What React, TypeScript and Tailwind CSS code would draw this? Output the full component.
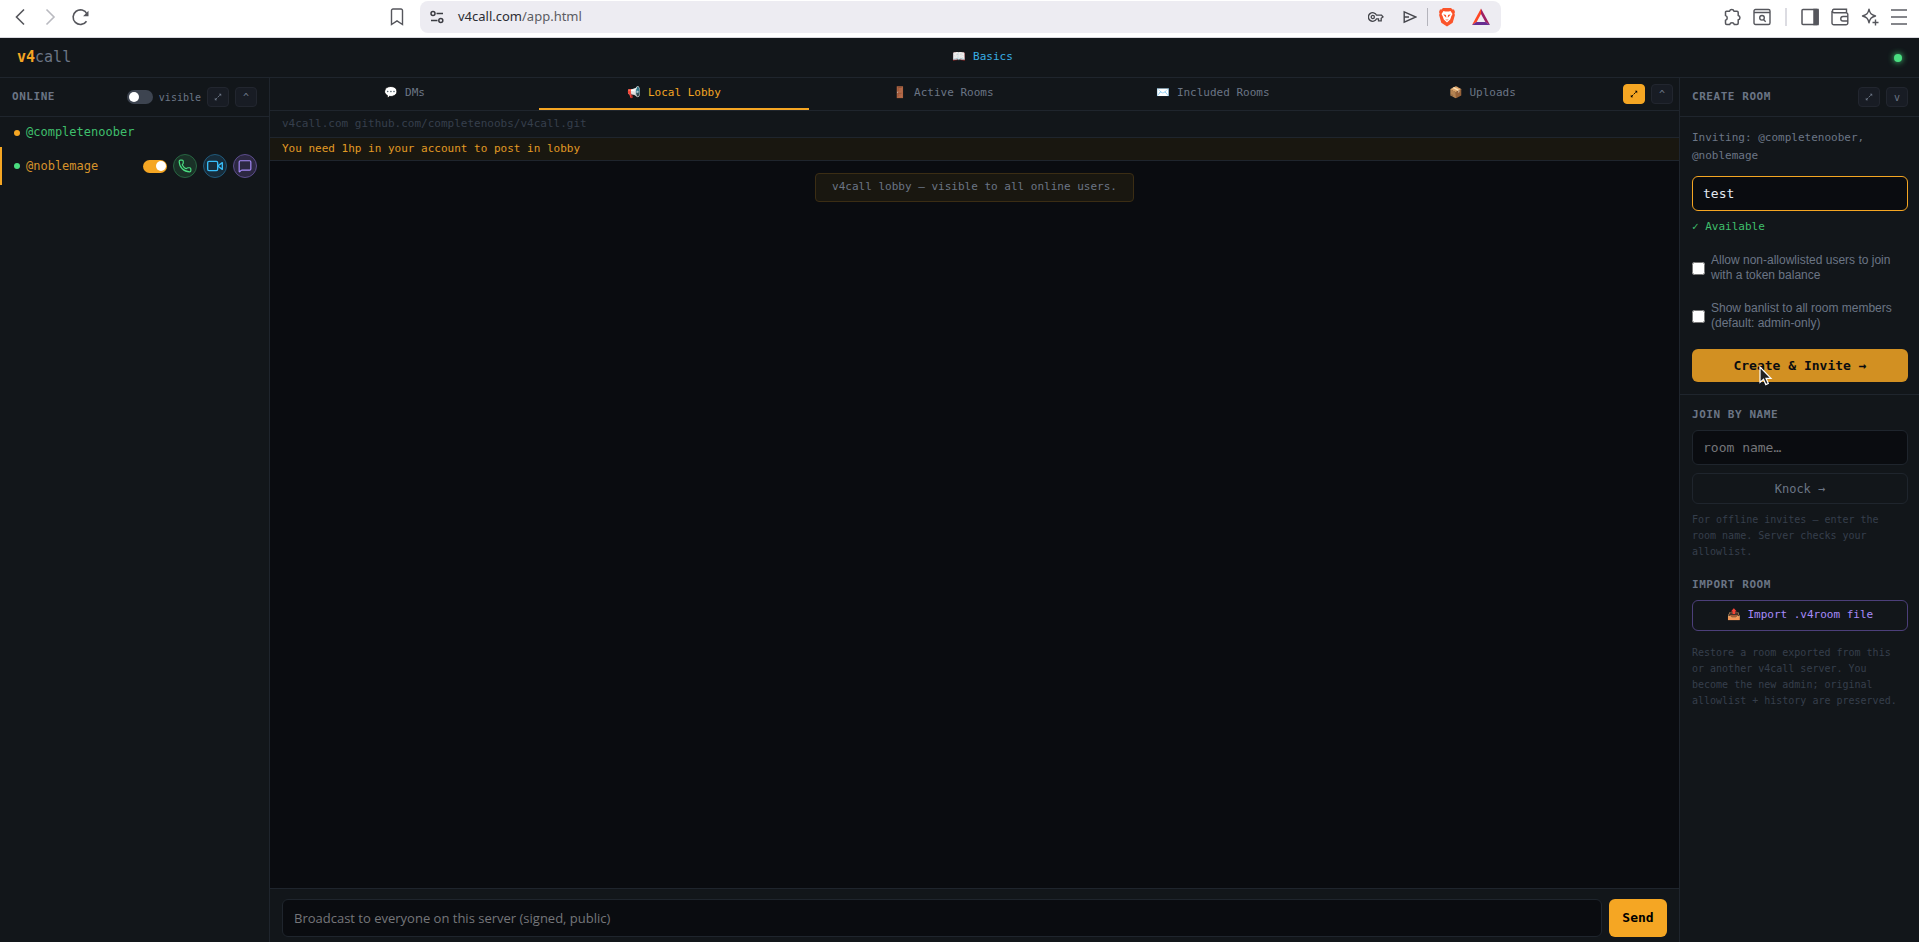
import type { ReactNode } from "react";
import { Phone, Video, MessageSquare } from "lucide-react";

const tabs = [
  { icon: "💬", label: "DMs" },
  { icon: "📢", label: "Local Lobby", active: true },
  { icon: "🚪", label: "Active Rooms" },
  { icon: "✉️", label: "Included Rooms" },
  { icon: "📦", label: "Uploads" },
];

function IconButton({ label, children, active }: { label: string; children: ReactNode; active?: boolean }) {
  return (
    <button
      aria-label={label}
      className={`flex h-5 w-[22px] shrink-0 items-center justify-center rounded border text-[10px] ${
        active
          ? "border-[#f5a623] bg-[#f5a623] text-black"
          : "border-[#22262f] bg-[#181c24] text-[#6b7585]"
      }`}
    >
      {children}
    </button>
  );
}

function Expand() {
  return (
    <svg viewBox="0 0 8 8" className="size-2" fill="currentColor" stroke="currentColor">
      <path d="M1.5 6.5l5-5" strokeWidth="0.9" strokeDasharray="2.6 0.8" />
      <path d="M4.8 0.8h2.4v2.4zM0.8 4.8v2.4h2.4z" stroke="none" />
    </svg>
  );
}

function BrowserBar() {
  return (
    <div className="flex h-[38px] shrink-0 items-center border-b border-[#d9d9df] bg-white pr-[11px] pb-[3px] pl-3 text-[#55565c]">
      <div className="flex w-[408px] shrink-0 items-center">
        <button aria-label="Back" className="mr-3 flex">
          <svg width="18" height="18" viewBox="0 0 18 18" fill="none" stroke="currentColor" strokeWidth="1.6">
            <path d="M12 1.5L4.5 9l7.5 7.5" />
          </svg>
        </button>
        <button aria-label="Forward" className="mr-3 flex text-[#b9bac0]">
          <svg width="18" height="18" viewBox="0 0 18 18" fill="none" stroke="currentColor" strokeWidth="1.6">
            <path d="M4.5 1.5L12 9l-7.5 7.5" />
          </svg>
        </button>
        <button aria-label="Reload" className="flex">
          <svg width="18" height="18" viewBox="0 0 18 18" fill="none" stroke="currentColor" strokeWidth="1.6">
            <path d="M14.5 13.2A7.3 7.3 0 1 1 15 6" />
            <path d="M16.5 2.8v5.4h-5.4z" fill="currentColor" stroke="none" />
          </svg>
        </button>
        <button aria-label="Bookmark" className="mr-4 ml-auto flex">
          <svg width="14" height="18" viewBox="0 0 14 18" fill="none" stroke="currentColor" strokeWidth="1.4">
            <path d="M1.5 2.5a1.5 1.5 0 0 1 1.5-1.5h8a1.5 1.5 0 0 1 1.5 1.5v14L7 12.8 1.5 16.5z" />
          </svg>
        </button>
      </div>
      <div className="flex h-8 min-w-0 flex-[1_1_1080px] items-center rounded-lg bg-[#edecf2] pr-[11px] pl-[10px]">
        <svg width="14" height="14" viewBox="0 0 14 14" fill="none" stroke="#3b3c42" strokeWidth="1.5">
          <circle cx="3" cy="3.5" r="2" />
          <path d="M6.5 3.5H13M1 10.5h6.5" />
          <circle cx="10.8" cy="10.5" r="2" />
        </svg>
        <span className="ml-[14px] font-['Noto_Sans',sans-serif] text-[13px] text-[#2c2d33]">
          v4call.com<span className="text-[#5b5c63]">/app.html</span>
        </span>
        <div className="ml-auto flex items-center text-[#45464c]">
          <svg width="16" height="12" viewBox="0 0 16 12" fill="none" stroke="currentColor" strokeWidth="1.3">
            <path d="M8.6 4.2A4.3 4.3 0 1 0 8.6 7.8H10.5V9.8H13.2V7.3L15 6 13.5 4.2z" />
            <circle cx="4.8" cy="6" r="1.6" />
          </svg>
          <svg width="14" height="14" viewBox="0 0 14 14" fill="none" stroke="currentColor" strokeWidth="1.4" className="ml-[19px]">
            <path d="M1.2 1.8L13 7 1.2 12.2V1.8zM1.2 7H6" />
          </svg>
          <span className="mx-[10px] h-[18px] w-px bg-[#b4b4bc]" />
          <svg width="18" height="20" viewBox="0 0 18 20">
            <path d="M5 1h8l1.5 1.6 1.5-.2 1 2.6-.6 1.6.5 1.5-2.2 7.6L9 19.5 3.3 15.7 1.1 8.1l.5-1.5L1 5l1-2.6 1.5.2z" fill="#fb542b" />
            <path d="M5.5 4l1.7.5h3.6l1.7-.5 2 3-1.3 2.6-1 2.8L9 15.500 5.800 12.400l-1-2.800L3.500 7z" fill="#fff" />
            <path d="M5.300 7.200l2.700.8.300 2.800L6.500 9zM12.700 7.200l-2.700.8-.3 2.800L11.500 9zM7.200 12l1.800.8 1.800-.8L9 13.800z" fill="#fb542b" />
          </svg>
          <svg width="18" height="18" viewBox="0 0 18 18" className="ml-4">
            <path d="M9 0.5L0 17l4.500-2.700L9 6z" fill="#ff4724" />
            <path d="M9 0.5L18 17l-4.500-2.700L9 6z" fill="#9e1f63" />
            <path d="M0 17h18l-4.500-2.900h-9z" fill="#662d91" />
          </svg>
        </div>
      </div>
      <div className="flex shrink-0 items-center pl-[223px]">
        <svg width="18" height="18" viewBox="0 0 18 18" fill="none" stroke="currentColor" strokeWidth="1.5">
          <path d="M2.500 3.200H5.600a2.200 2.200 0 0 1 4.300 0H13a1.200 1.200 0 0 1 1.200 1.200v3.100a2.200 2.200 0 0 1 0 4.300v3.500a1.200 1.200 0 0 1-1.200 1.200h-2.700a2.400 2.400 0 0 0-4.600 0H2.700a1.200 1.200 0 0 1-1.200-1.200v-3.100a2.400 2.400 0 0 0 0-4.600V4.200a1 1 0 0 1 1-1z" strokeLinejoin="round" />
        </svg>
        <svg width="18" height="18" viewBox="0 0 18 18" fill="none" stroke="currentColor" strokeWidth="1.4" className="ml-[11px]">
          <rect x="1" y="1.500" width="16" height="15" rx="1.5" />
          <path d="M1 4.500h16M10.500 11.500l2.200 2.200" />
          <circle cx="9" cy="9.800" r="2.300" />
        </svg>
        <span className="mx-[14px] h-[18px] w-0.5 bg-[#dcdce2]" />
        <svg width="18" height="18" viewBox="0 0 18 18" fill="none" stroke="currentColor" strokeWidth="1.5">
          <rect x="1" y="1.500" width="16" height="15" rx="1" />
          <path d="M13 1.500h4v15h-4z" fill="currentColor" />
        </svg>
        <svg width="18" height="18" viewBox="0 0 18 18" fill="none" stroke="currentColor" strokeWidth="1.4" className="ml-3">
          <path d="M1 3v12a1.800 1.800 0 0 0 1.800 1.800H15a1.800 1.800 0 0 0 1.800-1.800V6.500A1.800 1.800 0 0 0 15 4.700H2.800A1.800 1.800 0 0 1 2.800 1.200H15.500V4.700M17 8.500h-5a2.200 2.200 0 0 0 0 4.500h5" />
        </svg>
        <svg width="18" height="18" viewBox="0 0 18 18" fill="none" stroke="currentColor" strokeWidth="1.4" className="ml-3">
          <path d="M8 1.200c.9 4.300 2.200 5.600 6.500 6.800C10.200 9.200 8.900 10.500 8 14.800 7.100 10.500 5.800 9.200 1.500 8 5.800 6.800 7.100 5.500 8 1.200zM14.500 11.500v6M11.500 14.500h6" strokeLinejoin="round" />
        </svg>
        <svg width="18" height="18" viewBox="0 0 18 18" fill="none" stroke="#85868b" strokeWidth="2" className="ml-[11px]">
          <path d="M1 2h16M1 9h16M1 16h16" />
        </svg>
      </div>
    </div>
  );
}

function Sidebar() {
  return (
    <aside className="w-[270px] shrink-0 border-r border-[#1f252d] bg-[#12161a]">
      <div className="flex h-[39px] items-center gap-1.5 border-b border-[#1f252d] px-3">
        <h2 className="mr-auto text-[11px] font-bold tracking-wider text-[#6b7585]">ONLINE</h2>
        <label className="flex items-center gap-1.5 text-[10px] text-[#6b7585]">
          <input type="checkbox" className="peer sr-only" />
          <span className="flex h-3.5 w-[26px] items-center rounded-full bg-[#3d4450] px-0.5">
            <span className="size-2.5 rounded-full bg-white" />
          </span>
          visible
        </label>
        <IconButton label="Expand online list"><Expand /></IconButton>
        <IconButton label="Collapse online list">^</IconButton>
      </div>
      <ul className="pt-px text-xs leading-[15px]">
        <li className="flex items-center gap-1.5 py-[7px] pr-3 pl-3.5">
          <span className="size-1.5 rounded-full bg-[#f5a623]" />
          <span className="text-[#3fbf6c]">@completenoober</span>
        </li>
        <li className="flex items-center gap-1.5 border-l-2 border-[#f5a623] py-[7px] pr-3 pl-3">
          <span className="size-1.5 rounded-full bg-[#4ade80]" />
          <span className="mr-auto text-[#d6922a]">@noblemage</span>
          <label className="flex h-[13px] w-6 items-center justify-end rounded-full bg-[#f5a623] px-px">
            <input type="checkbox" defaultChecked aria-label="Select noblemage" className="sr-only" />
            <span className="size-2.5 rounded-full bg-white" />
          </label>
          <button aria-label="Call" className="flex size-6 items-center justify-center rounded-full border border-[#276441] bg-[#1a3127] text-[#4ade80]">
            <Phone size={14} strokeWidth={2} />
          </button>
          <button aria-label="Video call" className="flex size-6 items-center justify-center rounded-full border border-[#20597a] bg-[#172c3a] text-[#38bdf8]">
            <svg width="16" height="16" viewBox="0 0 24 24" fill="none" stroke="currentColor" strokeWidth="2" strokeLinejoin="round">
              <rect x="1" y="5" width="15" height="14" rx="2" />
              <path d="M23 7l-7 5 7 5z" />
            </svg>
          </button>
          <button aria-label="Message" className="flex size-6 items-center justify-center rounded-full border border-[#5b4c8c] bg-[#2c2841] text-[#a78bfa]">
            <MessageSquare size={14} strokeWidth={2} />
          </button>
        </li>
      </ul>
    </aside>
  );
}

function Lobby() {
  return (
    <main className="flex min-w-0 flex-1 flex-col bg-[#0a0c10]">
      <nav className="flex h-[33px] shrink-0 border-b border-[#1f252d] bg-[#12161a]">
        {tabs.map((tab) => (
          <button
            key={tab.label}
            className={`flex-1 border-b-2 text-[11px] ${
              tab.active ? "border-[#f5a623] text-[#f5a623]" : "border-transparent text-[#6b7585]"
            }`}
          >
            {tab.icon} {tab.label}
          </button>
        ))}
        <div className="flex items-center gap-1.5 px-1.5">
          <IconButton label="Expand lobby" active><Expand /></IconButton>
          <IconButton label="Collapse lobby">^</IconButton>
        </div>
      </nav>
      <div className="flex h-[27px] shrink-0 items-center border-b border-[#1f252d] bg-[#12161a] px-3 text-[11px] text-[#363f4c]">
        v4call.com github.com/completenoobs/v4call.git
      </div>
      <div className="flex h-[23px] shrink-0 items-center border-b border-[#1f252d] bg-[#191710] px-3 text-[11px] text-[#e29a24]">
        You need 1hp in your account to post in lobby
      </div>
      <div className="flex flex-1 flex-col items-center p-3">
        <p className="flex h-[29px] items-center rounded border border-[#3b2d14] bg-[#191710] px-4 text-[11px] text-[#6b7585]">
          v4call lobby — visible to all online users.
        </p>
      </div>
      <form className="flex shrink-0 gap-[7px] border-t border-[#1f252d] bg-[#12161a] px-3 pt-2.5 pb-[5px]">
        <input
          aria-label="Broadcast message"
          placeholder="Broadcast to everyone on this server (signed, public)"
          className="h-[38px] min-w-0 flex-1 rounded-md border border-[#1f252d] bg-[#0a0c10] px-[11px] font-['Open_Sans',sans-serif] text-[13px] placeholder:text-[#75767a]"
        />
        <button type="button" className="w-[58px] rounded-md bg-[#f5a623] text-[13px] font-bold text-black">
          Send
        </button>
      </form>
    </main>
  );
}

function RoomPanel() {
  return (
    <aside className="w-60 shrink-0 border-l border-[#1f252d] bg-[#12161a] text-[#6b7585]">
      <div className="flex h-[39px] items-center gap-1.5 border-b border-[#1f252d] pr-[11px] pl-3">
        <h2 className="mr-auto text-[11px] font-bold tracking-wider">CREATE ROOM</h2>
        <IconButton label="Expand create room"><Expand /></IconButton>
        <IconButton label="Collapse create room">v</IconButton>
      </div>
      <section className="border-b border-[#1f252d] py-3 pr-[11px] pl-3">
        <p className="text-[11px] leading-[18px]">Inviting: @completenoober, @noblemage</p>
        <input
          aria-label="New room name"
          defaultValue="test"
          className="mt-[11px] block h-[35px] w-full rounded-md border border-[#f5a623] bg-[#0a0c10] px-2.5 text-[13px] text-[#e2e8f0]"
        />
        <p className="mt-2 text-[11px] leading-4 text-[#3fbf6c]">✓ Available</p>
        <label className="mt-[18px] flex items-center gap-1.5 font-['Liberation_Sans',sans-serif] text-xs leading-[15px]">
          <input type="checkbox" className="size-[13px] shrink-0" />
          Allow non-allowlisted users to join with a token balance
        </label>
        <label className="mt-[18px] flex items-center gap-1.5 font-['Liberation_Sans',sans-serif] text-xs leading-[15px]">
          <input type="checkbox" className="size-[13px] shrink-0" />
          Show banlist to all room members (default: admin-only)
        </label>
        <button className="mt-[18px] h-[33px] w-full rounded-md bg-[#d29022] text-[13px] font-bold text-[#0a0c10]">
          Create &amp; Invite →
        </button>
      </section>
      <section className="py-3 pr-[11px] pl-3">
        <h2 className="mb-[7px] text-[11px] leading-4 font-bold tracking-wider">JOIN BY NAME</h2>
        <input
          aria-label="Room name"
          placeholder="room name…"
          className="block h-[35px] w-full rounded-md border border-[#1f252d] bg-[#0a0c10] px-2.5 text-[13px] placeholder:text-[#75767a]"
        />
        <button className="mt-2 h-[31px] w-full rounded-md border border-[#1f252d] text-xs">Knock →</button>
        <p className="mt-2 pr-1 text-[10px] leading-4 text-[#363f4c]">
          For offline invites — enter the room name. Server checks your allowlist.
        </p>
        <h2 className="mt-[17px] mb-[7px] text-[11px] leading-4 font-bold tracking-wider">IMPORT ROOM</h2>
        <button className="h-[31px] w-full rounded-md border border-[#4c3f7a] text-[11px] text-[#a78bfa]">
          📤 Import .v4room file
        </button>
        <p className="mt-3.5 pr-1 text-[10px] leading-4 text-[#363f4c]">
          Restore a room exported from this or another v4call server. You become the new admin; original
          allowlist + history are preserved.
        </p>
      </section>
    </aside>
  );
}

export default function App() {
  return (
    <div className="relative flex h-screen flex-col overflow-hidden bg-[#0a0c10] font-['DejaVu_Sans_Mono','DejaVu_Sans',monospace]">
      <BrowserBar />
      <header className="flex h-10 shrink-0 items-center justify-between border-b border-[#1f252d] bg-[#12161a] px-[17px]">
        <div className="text-[15px] text-[#6b7585]">
          <span className="font-bold text-[#f5a623]">v4</span>call
        </div>
        <a href="#basics" className="text-[11px] text-[#38aee4]">📖 Basics</a>
        <span className="size-2 rounded-full bg-[#4ade80] shadow-[0_0_6px_#4ade80]" />
      </header>
      <div className="flex min-h-0 flex-1">
        <Sidebar />
        <Lobby />
        <RoomPanel />
      </div>
      <svg width="14" height="20" viewBox="0 0 14 20" className="pointer-events-none absolute top-[366px] left-[1759px]">
        <path d="M1 1v15.500l3.500-3.200 2.300 5.300 2.500-1.100-2.300-5.200h5z" fill="#222" stroke="#fff" strokeWidth="1.2" />
      </svg>
    </div>
  );
}
